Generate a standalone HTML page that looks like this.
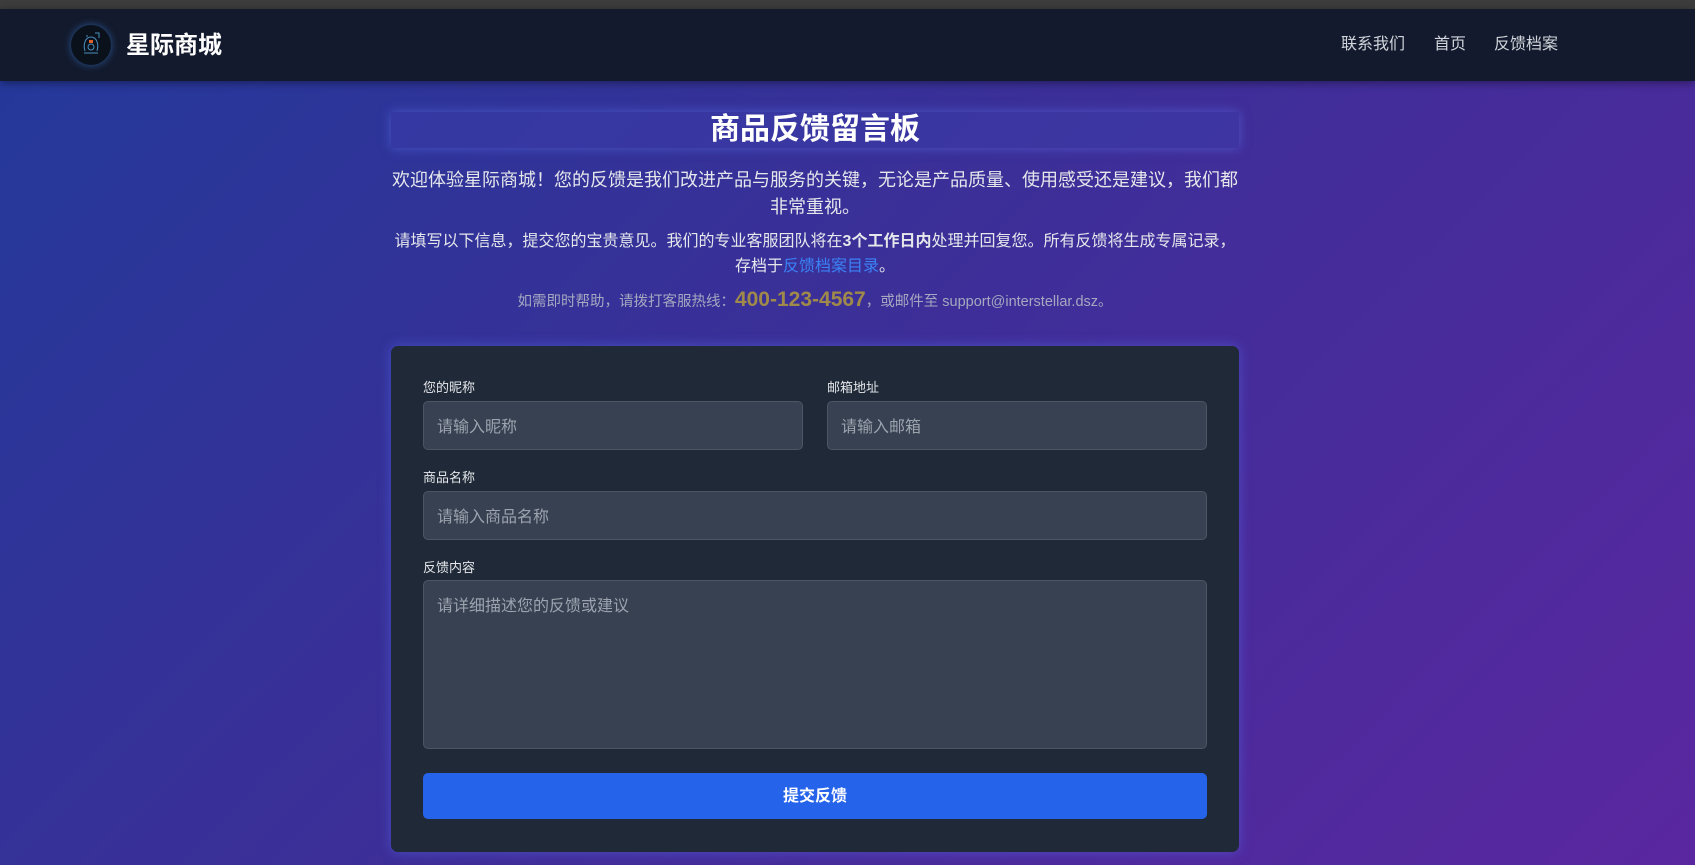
<!DOCTYPE html>
<html><head><meta charset="utf-8"><style>
*{margin:0;padding:0;box-sizing:border-box}
html,body{width:1695px;height:865px;overflow:hidden}
body{font-family:"Liberation Sans","Noto Sans CJK SC",sans-serif;background:linear-gradient(135deg,#23399a 0%,#3b2f98 45%,#5a27a0 100%);position:relative;color:#e5e7eb}
.top{position:absolute;left:0;top:0;width:1695px;height:9px;background:#3c3c3c}
.nav{position:absolute;left:0;top:9px;width:1695px;height:72px;background:#131a2d;box-shadow:0 2px 8px rgba(0,0,0,.4)}
.logo{position:absolute;left:71px;top:16px;width:40px;height:40px;border-radius:50%;background:#0b111b;box-shadow:0 0 8px rgba(60,130,220,.6)}
.brand{position:absolute;left:126px;top:21px;font-size:24px;font-weight:bold;color:#fff;line-height:32px}
.nl{position:absolute;top:25px;font-size:16px;color:#d1d5db;line-height:22px}
.tb{position:absolute;left:391px;top:112px;width:848px;height:36px;background:rgba(60,60,170,.55);box-shadow:0 0 10px rgba(90,110,230,.6);text-align:center;font-size:30px;font-weight:bold;color:#fff;line-height:36px}
.p{position:absolute;left:371px;width:888px;text-align:center;white-space:nowrap}
.card{position:absolute;left:391px;top:346px;width:848px;height:506px;background:#1f2937;border-radius:7px;box-shadow:0 0 12px rgba(90,110,240,.5)}
.lb{position:absolute;font-size:13px;color:#e5e7eb;line-height:16px}
.in{position:absolute;background:#374151;border:1px solid #4b5563;border-radius:5px;color:#9ca3af;font-size:16px;padding-left:13px}
.btn{position:absolute;left:32px;top:427px;width:784px;height:46px;background:#2563eb;border-radius:5px;color:#fff;font-weight:bold;font-size:16px;text-align:center;line-height:48px}
</style></head><body>
<div class="top"></div>
<div class="nav">
<div class="logo"><svg width="40" height="40" viewBox="0 0 40 40"><g fill="none" stroke="#4a8fc0" stroke-width="1"><path d="M14 26c-2-6 0-14 6-14s8 8 6 14"/><circle cx="20" cy="22" r="3"/><path d="M13 28h14M16 12v-2M24 8h4v5"/></g><rect x="18" y="15" width="4" height="3" fill="#e0602a"/></svg></div>
<div class="brand">星际商城</div>
<div class="nl" style="left:1341px">联系我们</div>
<div class="nl" style="left:1434px">首页</div>
<div class="nl" style="left:1494px">反馈档案</div>
</div>
<div class="tb">商品反馈留言板</div>
<div class="p" style="top:167px;font-size:18px;line-height:27px;color:#e5e7eb">欢迎体验星际商城！您的反馈是我们改进产品与服务的关键，无论是产品质量、使用感受还是建议，我们都<br>非常重视。</div>
<div class="p" style="top:229px;font-size:16px;line-height:25px;color:#e5e7eb">请填写以下信息，提交您的宝贵意见。我们的专业客服团队将在<b>3个工作日内</b>处理并回复您。所有反馈将生成专属记录，<br>存档于<span style="color:#3b82f6">反馈档案目录</span>。</div>
<div class="p" style="top:286px;font-size:14.5px;line-height:28px;color:#a5a8c0">如需即时帮助，请拨打客服热线：<b style="font-size:21px;color:#a08a4a">400-123-4567</b>，或邮件至 support@interstellar.dsz。</div>
<div class="card">
<div class="lb" style="left:32px;top:34px">您的昵称</div>
<div class="lb" style="left:436px;top:34px">邮箱地址</div>
<div class="in" style="left:32px;top:55px;width:380px;height:49px;line-height:51px">请输入昵称</div>
<div class="in" style="left:436px;top:55px;width:380px;height:49px;line-height:51px">请输入邮箱</div>
<div class="lb" style="left:32px;top:124px">商品名称</div>
<div class="in" style="left:32px;top:145px;width:784px;height:49px;line-height:51px">请输入商品名称</div>
<div class="lb" style="left:32px;top:214px">反馈内容</div>
<div class="in" style="left:32px;top:234px;width:784px;height:169px;line-height:20px;padding-top:16px">请详细描述您的反馈或建议</div>
<div class="btn">提交反馈</div>
</div>
</body></html>
